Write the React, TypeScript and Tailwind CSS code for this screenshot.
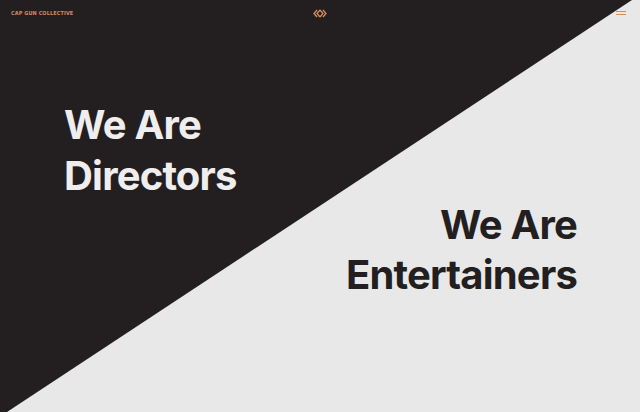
import React from 'react';

function Logo() {
  return (
    <svg width="14" height="9" viewBox="0 0 14 9" fill="none" stroke="#d98a5c" strokeWidth="1.3">
      <path d="M4 1 L1 4.5 L4 8" />
      <path d="M7 1 L4 4.5 L7 8" />
      <path d="M7 1 L10 4.5 L7 8" />
      <path d="M10 1 L13 4.5 L10 8" />
    </svg>
  );
}

function Menu() {
  return (
    <svg width="10" height="6" viewBox="0 0 10 6" fill="none" stroke="#d98a5c" strokeWidth="1">
      <path d="M0 1.5 H10" />
      <path d="M0 4.5 H10" />
    </svg>
  );
}

export default function App() {
  return (
    <div className="relative w-[640px] h-[412px] overflow-hidden bg-[#e9e8e9]" style={{ fontFamily: 'Inter, "Liberation Sans", sans-serif' }}>
      <svg className="absolute inset-0" width="640" height="412" viewBox="0 0 640 412">
        <polygon points="0,0 632,0 7,412 0,412" fill="#231f20" />
      </svg>

      <div className="relative flex flex-col h-full">
        <header className="flex items-center justify-between px-[11px] h-[26px]">
          <span className="text-[5.5px] font-bold tracking-[0.02em] text-[#cf8a66] w-[120px]" style={{ fontFamily: '"DejaVu Sans Condensed", "DejaVu Sans", sans-serif' }}>
            CAP GUN COLLECTIVE
          </span>
          <Logo />
          <div className="w-[120px] flex justify-end pr-[3px]">
            <Menu />
          </div>
        </header>

        <div className="pl-[64px] pt-[73px]">
          <h1 className="text-[40px] leading-[51px] font-bold text-[#efedee] tracking-[-0.02em]">
            We Are
            <br />
            Directors
          </h1>
        </div>

        <div className="flex justify-end pr-[63px] mt-[-1px]">
          <h2 className="text-[40px] leading-[50px] font-bold text-[#231f20] text-right tracking-[-0.02em]">
            We Are
            <br />
            Entertainers
          </h2>
        </div>
      </div>
    </div>
  );
}
